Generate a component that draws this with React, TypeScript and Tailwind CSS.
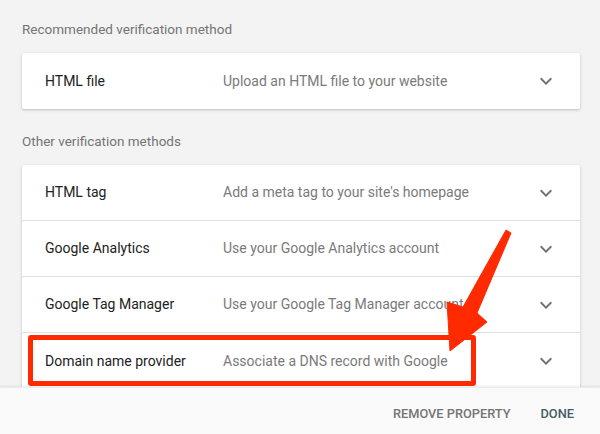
import React from 'react';

type Method = { name: string; desc: string };

const RECOMMENDED: Method[] = [{ name: 'HTML file', desc: 'Upload an HTML file to your website' }];

const OTHERS: Method[] = [
  { name: 'HTML tag', desc: "Add a meta tag to your site's homepage" },
  { name: 'Google Analytics', desc: 'Use your Google Analytics account' },
  { name: 'Google Tag Manager', desc: 'Use your Google Tag Manager account' },
  { name: 'Domain name provider', desc: 'Associate a DNS record with Google' },
];

const ExpandMore = () => (
  <svg width="24" height="24" viewBox="0 0 24 24" className="fill-[#757575]">
    <path d="M16.59 8.59L12 13.17 7.41 8.59 6 10l6 6 6-6z" />
  </svg>
);

const MethodRow: React.FC<{ method: Method; last?: boolean }> = ({ method, last }) => (
  <div className={`flex items-center h-[56px] pl-[23px] pr-[22px] ${last ? '' : 'border-b border-[#e0e0e0]'}`}>
    <div className="w-[178px] shrink-0 text-[14px] text-[#222]">{method.name}</div>
    <div className="flex-1 text-[14px] text-[#7a7a7a] whitespace-nowrap">{method.desc}</div>
    <ExpandMore />
  </div>
);

const Section: React.FC<{ title: string; items: Method[] }> = ({ title, items }) => (
  <div>
    <div className="h-[20px] leading-[20px] text-[13.5px] text-[#757575] mb-[14px]">{title}</div>
    <div className="bg-white shadow-[0_1px_3px_rgba(0,0,0,0.22)] rounded-[2px]">
      {items.map((m, i) => (
        <MethodRow key={m.name} method={m} last={i === items.length - 1} />
      ))}
    </div>
  </div>
);

export default function App() {
  return (
    <div
      className="relative w-[600px] h-[434px] flex flex-col bg-[#f3f3f3] overflow-hidden"
      style={{ fontFamily: 'Roboto, "Liberation Sans", sans-serif' }}
    >
      <div className="flex-1 overflow-hidden pl-[22px] pr-[20px] pt-[19px] flex flex-col gap-[22px]">
        <Section title="Recommended verification method" items={RECOMMENDED} />
        <Section title="Other verification methods" items={OTHERS} />
      </div>

      <div className="h-[47px] shrink-0 bg-[#fafafa] shadow-[0_-1px_2px_rgba(0,0,0,0.08)] border-t border-[#ececec] flex items-center justify-end pt-[5px] pr-[26px] gap-[30px] z-10">
        <button className="text-[12.8px] font-medium text-[#757575]">REMOVE PROPERTY</button>
        <button className="text-[12.8px] font-medium text-[#455a64]">DONE</button>
      </div>

      {/* annotation: red highlight box */}
      <div className="absolute left-[28px] top-[335px] w-[448px] h-[51px] border-[5px] border-[#ff2a00] rounded-[3px] z-20" />

      {/* annotation: arrow */}
      <svg className="absolute left-0 top-0 z-20 pointer-events-none" width="600" height="434" viewBox="0 0 600 434">
        <polygon
          points="506,230 511,233 477,313 487,322 450,351 447,302 463,307"
          fill="#ff2a00"
          strokeLinejoin="round"
          stroke="#ff2a00"
          strokeWidth="1"
        />
      </svg>
    </div>
  );
}
